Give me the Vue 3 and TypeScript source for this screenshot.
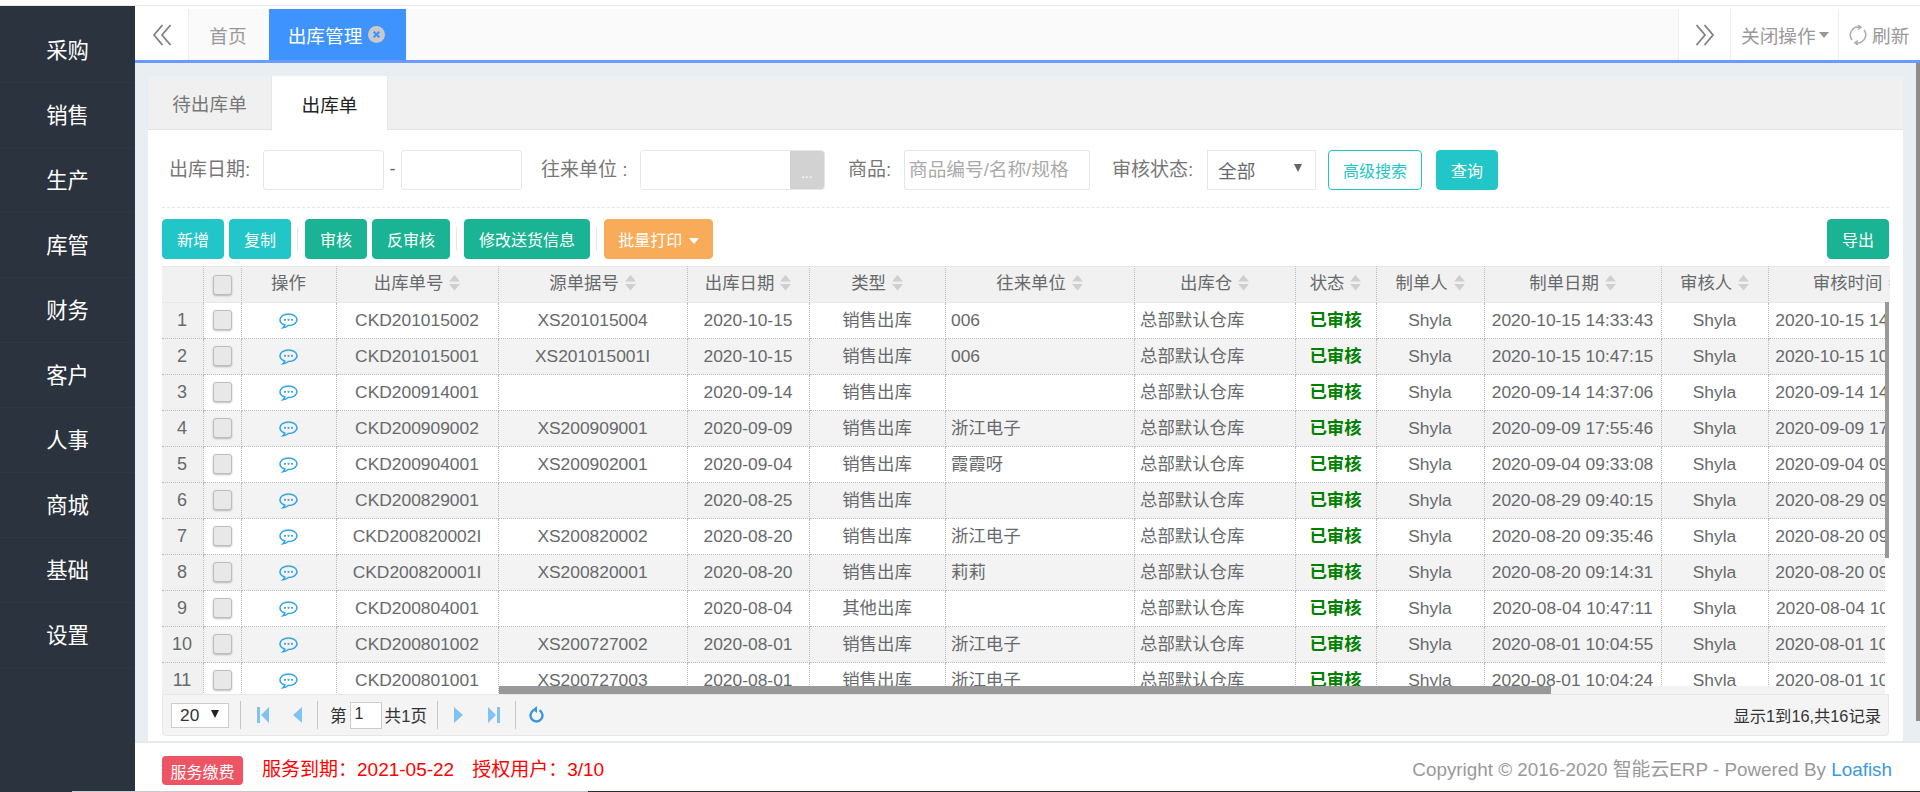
<script setup lang="ts">
interface Row {
  no: string
  src: string
  date: string
  type: string
  unit: string
  made: string
}
const menus = ['采购', '销售', '生产', '库管', '财务', '客户', '人事', '商城', '基础', '设置']
const columns = [
  { label: '出库单号', cls: 'c3' },
  { label: '源单据号', cls: 'c4' },
  { label: '出库日期', cls: 'c5' },
  { label: '类型', cls: 'c6' },
  { label: '往来单位', cls: 'c7' },
  { label: '出库仓', cls: 'c8' },
  { label: '状态', cls: 'c9' },
  { label: '制单人', cls: 'c10' },
  { label: '制单日期', cls: 'c11' },
  { label: '审核人', cls: 'c12' },
  { label: '审核时间', cls: 'c13' }
]
const rows: Row[] = [
  { no: 'CKD201015002', src: 'XS201015004', date: '2020-10-15', type: '销售出库', unit: '006', made: '2020-10-15 14:33:43' },
  { no: 'CKD201015001', src: 'XS201015001I', date: '2020-10-15', type: '销售出库', unit: '006', made: '2020-10-15 10:47:15' },
  { no: 'CKD200914001', src: '', date: '2020-09-14', type: '销售出库', unit: '', made: '2020-09-14 14:37:06' },
  { no: 'CKD200909002', src: 'XS200909001', date: '2020-09-09', type: '销售出库', unit: '浙江电子', made: '2020-09-09 17:55:46' },
  { no: 'CKD200904001', src: 'XS200902001', date: '2020-09-04', type: '销售出库', unit: '霞霞呀', made: '2020-09-04 09:33:08' },
  { no: 'CKD200829001', src: '', date: '2020-08-25', type: '销售出库', unit: '', made: '2020-08-29 09:40:15' },
  { no: 'CKD200820002I', src: 'XS200820002', date: '2020-08-20', type: '销售出库', unit: '浙江电子', made: '2020-08-20 09:35:46' },
  { no: 'CKD200820001I', src: 'XS200820001', date: '2020-08-20', type: '销售出库', unit: '莉莉', made: '2020-08-20 09:14:31' },
  { no: 'CKD200804001', src: '', date: '2020-08-04', type: '其他出库', unit: '', made: '2020-08-04 10:47:11' },
  { no: 'CKD200801002', src: 'XS200727002', date: '2020-08-01', type: '销售出库', unit: '浙江电子', made: '2020-08-01 10:04:55' },
  { no: 'CKD200801001', src: 'XS200727003', date: '2020-08-01', type: '销售出库', unit: '浙江电子', made: '2020-08-01 10:04:24' }
]
</script>

<template>
  <div class="app">
    <div class="topline"></div>
    <div class="body">
      <nav class="side">
        <a v-for="m in menus" :key="m" class="side-item">{{ m }}</a>
      </nav>
      <div class="content">
        <div class="tabsbar">
          <div class="chev">
            <svg width="20" height="24" viewBox="0 0 20 24" fill="none" stroke="#808080" stroke-width="1.8"><path d="M10.500 2 2 12l8.500 10M18.500 2 10 12l8.500 10" /></svg>
          </div>
          <div class="tab">首页</div>
          <div class="tab tab-on">
            出库管理
            <svg class="tab-x" width="17" height="17" viewBox="0 0 17 17"><circle cx="8.500" cy="8.500" r="8.500" fill="#c9c9c9" /><path d="M5.700 5.700l5.600 5.600M11.300 5.700l-5.600 5.600" stroke="#3e93ff" stroke-width="2.200" /></svg>
          </div>
          <div class="grow"></div>
          <div class="chev chev-r">
            <svg width="20" height="24" viewBox="0 0 20 24" fill="none" stroke="#808080" stroke-width="1.8"><path d="M1.500 2 10 12l-8.500 10M9.500 2 18 12 9.500 22" /></svg>
          </div>
          <div class="tool tool-close">关闭操作<i class="caret"></i></div>
          <div class="tool tool-refresh">
            <svg width="18" height="20" viewBox="0 0 18 20" fill="none" stroke="#aaa" stroke-width="1.500"><path d="M3 15A8 8 0 0 1 11 2.300M15 5A8 8 0 0 1 7 17.700" /><path d="M9 0l3 2.300-3 2.200M9 15.500l-3 2.200 3 2.300" /></svg>
            <span>刷新</span>
          </div>
        </div>
        <div class="page">
          <div class="panel">
            <div class="ptabs">
              <div class="ptab">待出库单</div>
              <div class="ptab ptab-on">出库单</div>
            </div>
            <div class="pbody">
              <div class="filters">
                <label class="lb lb-date">出库日期:</label>
                <input class="inp inp-date" />
                <span class="dash">-</span>
                <input class="inp inp-date" />
                <label class="lb lb-unit">往来单位 :</label>
                <div class="unit">
                  <input class="unit-in" />
                  <span class="unit-btn">...</span>
                </div>
                <label class="lb lb-goods">商品:</label>
                <input class="inp inp-goods" placeholder="商品编号/名称/规格" />
                <label class="lb lb-state">审核状态:</label>
                <div class="sel"><span>全部</span><i class="sel-arrow"></i></div>
                <button class="btn btn-ghost">高级搜索</button>
                <button class="btn btn-teal btn-query">查询</button>
              </div>
              <div class="toolbar">
                <button class="btn btn-teal">新增</button>
                <button class="btn btn-teal">复制</button>
                <i class="tsep"></i>
                <button class="btn btn-green">审核</button>
                <button class="btn btn-green">反审核</button>
                <i class="tsep"></i>
                <button class="btn btn-green">修改送货信息</button>
                <i class="tsep"></i>
                <button class="btn btn-orange">批量打印 <i class="caret caret-w"></i></button>
                <div class="grow"></div>
                <button class="btn btn-green">导出</button>
              </div>
              <div class="grid-wrap">
                <table class="grid">
                  <colgroup>
                    <col class="c1" /><col class="c2" /><col class="cop" />
                    <col v-for="c in columns" :key="c.label" :class="c.cls" />
                  </colgroup>
                  <thead>
                    <tr>
                      <th></th>
                      <th class="th-chk"><i class="chk"></i></th>
                      <th>操作</th>
                      <th v-for="c in columns" :key="c.label">
                        {{ c.label }}
                        <svg class="sort" width="11" height="16" viewBox="0 0 11 16"><path d="M5.500 0 11 6.500H0zM0 9h11l-5.500 6.500z" fill="#cfcfcf" /></svg>
                      </th>
                    </tr>
                  </thead>
                  <tbody>
                    <tr v-for="(r, i) in rows" :key="r.no" :class="{ odd: i % 2 === 1 }">
                      <td class="num">{{ i + 1 }}</td>
                      <td><i class="chk"></i></td>
                      <td>
                        <svg class="chat" width="19" height="16" viewBox="0 0 19 16" fill="none">
                          <path d="M9.500 1C4.800 1 1 3.600 1 6.800c0 2.300 2 4.300 4.800 5.200-.2 1-.8 2-1.800 2.800 2.200-.2 4-1.300 5.200-2.300h.3c4.700 0 8.500-2.500 8.500-5.700S14.200 1 9.500 1z" stroke="#35a5e8" stroke-width="1.600" />
                          <circle cx="6" cy="6.800" r="1.100" fill="#35a5e8" /><circle cx="9.500" cy="6.800" r="1.100" fill="#35a5e8" /><circle cx="13" cy="6.800" r="1.100" fill="#35a5e8" />
                        </svg>
                      </td>
                      <td>{{ r.no }}</td>
                      <td>{{ r.src }}</td>
                      <td>{{ r.date }}</td>
                      <td>{{ r.type }}</td>
                      <td class="left">{{ r.unit }}</td>
                      <td class="left">总部默认仓库</td>
                      <td class="state">已审核</td>
                      <td>Shyla</td>
                      <td>{{ r.made }}</td>
                      <td>Shyla</td>
                      <td>{{ r.made }}</td>
                    </tr>
                  </tbody>
                </table>
                <div class="vtrack"><div class="vthumb"></div></div>
                <div class="htrack"><div class="hthumb"></div></div>
              </div>
              <div class="pager">
                <div class="pg-sel"><span>20</span><i class="sel-arrow sel-dark"></i></div>
                <i class="psep psep-a"></i>
                <svg class="pi pi-first" width="12" height="16" viewBox="0 0 12 16"><path d="M0 0h3v16H0zM12 0v16L4 8z" fill="#82c2f2" /></svg>
                <svg class="pi pi-prev" width="9" height="16" viewBox="0 0 9 16"><path d="M9 0v16L0 8z" fill="#82c2f2" /></svg>
                <i class="psep psep-b"></i>
                <span class="pg-t">第</span>
                <input class="pg-in" value="1" />
                <span class="pg-t">共1页</span>
                <i class="psep psep-c"></i>
                <svg class="pi pi-next" width="9" height="16" viewBox="0 0 9 16"><path d="M0 0v16l9-8z" fill="#82c2f2" /></svg>
                <svg class="pi pi-last" width="12" height="16" viewBox="0 0 12 16"><path d="M0 0v16l8-8zM9 0h3v16H9z" fill="#82c2f2" /></svg>
                <i class="psep psep-d"></i>
                <svg class="pi pi-ref" width="15" height="18" viewBox="0 0 15 18" fill="none"><path d="M4.500 4.300a6 6 0 1 0 6 0" stroke="#3b96dc" stroke-width="2.400" /><path d="M8 0v7L3.500 3.500z" fill="#3b96dc" /></svg>
                <div class="grow"></div>
                <span class="pg-info">显示1到16,共16记录</span>
              </div>
            </div>
          </div>
        </div>
        <footer class="foot">
          <span class="pay">服务缴费</span>
          <span class="due">服务到期：2021-05-22</span>
          <span class="due due-u">授权用户：3/10</span>
          <div class="grow"></div>
          <span class="copy">Copyright © 2016-2020 智能云ERP - Powered By <a class="link">Loafish</a></span>
        </footer>
      </div>
    </div>
    <div class="bottomline"><i class="bl-a"></i><i class="bl-b"></i></div>
    <div class="pagebar"></div>
  </div>
</template>

<style>
html, body { margin: 0; padding: 0; overflow: hidden; background: #fff; }
* { box-sizing: border-box; }
</style>

<style scoped>
.app {
  position: relative;
  width: 1920px;
  height: 792px;
  display: flex;
  flex-direction: column;
  font-family: "Liberation Sans", "Noto Sans CJK SC", sans-serif;
  font-size: 17.33px;
  color: #676a6c;
  overflow: hidden;
}
.topline { height: 6px; background: #fff; border-bottom: 1px solid #e8e8e8; flex: none; }
.body { flex: 1; display: flex; min-height: 0; }
.grow { flex: 1; }

.side { width: 135px; flex: none; background: #2b333e; padding-top: 12px; }
.side-item {
  display: flex; align-items: center; justify-content: center;
  height: 65px; padding-bottom: 4px; color: #fff; font-size: 21.33px;
  border-bottom: 1px solid #2f3744;
}

.content { flex: 1; min-width: 0; display: flex; flex-direction: column; }
.tabsbar { margin-top: 3px; height: 54px; flex: none; display: flex; background: #fafafa; border-bottom: 3px solid #6a9bff; }
.chev { width: 54px; display: flex; align-items: center; justify-content: center; background: #fff; border-right: 1px solid #eee; }
.chev-r { width: 53px; border-left: 1px solid #eee; border-right: 1px solid #eee; }
.tab { width: 80px; padding-right: 2px; display: flex; align-items: center; justify-content: center; color: #999; font-size: 18.67px; }
.tab-on { width: 137px; background: #3e93ff; color: #fff; }
.tab-x { margin-left: 6px; }
.tool { display: flex; align-items: center; background: #fff; color: #999; font-size: 18.67px; }
.tool-close { width: 108px; padding-left: 10px; border-right: 1px solid #eee; }
.tool-refresh { width: 81px; padding-left: 10px; gap: 5px; }
.caret { display: inline-block; margin-left: 3px; border: 5.5px solid transparent; border-top: 6px solid #999; border-bottom: 0; }
.caret-w { border-top-color: #fff; margin-left: 2px; vertical-align: 2px; }

.page { flex: 1; min-height: 0; background: #e9eef3; padding: 13px 17px 0 13px; }
.panel { height: 100%; background: #fff; display: flex; flex-direction: column; }
.ptabs { height: 54px; flex: none; display: flex; background: #f0f0f0; border-bottom: 1px solid #e3e3e3; }
.ptab { width: 123px; height: 53px; display: flex; align-items: center; justify-content: center; font-size: 18.67px; color: #777; }
.ptab-on { width: 117px; height: 55px; background: #fff; color: #222; border-left: 1px solid #e7e7e7; border-right: 1px solid #e7e7e7; }
.pbody { flex: 1; padding: 20px 14px 0; min-height: 0; }

.filters { height: 58px; display: flex; align-items: flex-start; border-bottom: 1px dashed #e3e6e8; }
.lb { height: 40px; line-height: 39px; font-size: 19px; color: #777; white-space: nowrap; }
.lb-date { margin-left: 7px; width: 94px; }
.lb-unit { margin-left: 19px; width: 99px; }
.lb-goods { margin-left: 23px; width: 56px; }
.lb-state { margin-left: 22px; width: 95px; }
.inp { height: 40px; border: 1px solid #e5e6e7; border-radius: 3px; background: #fff; outline: none; font: inherit; padding: 0 4px; }
.inp-date { width: 121px; }
.dash { width: 17px; text-align: center; line-height: 38px; font-size: 18px; }
.unit { width: 185px; height: 40px; display: flex; border: 1px solid #e5e6e7; border-radius: 4px; overflow: hidden; }
.unit-in { flex: 1; min-width: 0; border: 0; outline: none; }
.unit-btn { width: 34px; background: #d2d2d2; color: #fff; font-size: 14px; text-align: center; line-height: 44px; }
.inp-goods { width: 186px; border-radius: 2px; font-size: 18.67px; }
.inp-goods::placeholder { color: #aaa; }
.sel { width: 109px; height: 40px; border: 1px solid #e5e6e7; display: flex; align-items: center; justify-content: space-between; padding: 0 13px 2px 10px; font-size: 18.67px; }
.sel-arrow { display: block; border: 4px solid transparent; border-top: 8px solid #666; border-bottom: 0; margin-top: -2px; }
.btn { height: 40px; border: 1px solid transparent; border-radius: 4px; color: #fff; font: inherit; font-size: 16px; padding: 0 13.500px; white-space: nowrap; }
.btn-teal { background: #23c6c8; border-color: #23c6c8; }
.btn-green { background: #1ab394; border-color: #1ab394; }
.btn-orange { background: #f8ac59; border-color: #f8ac59; padding: 0 13px; }
.btn-ghost { margin-left: 12px; width: 94px; padding: 0; background: #fff; border-color: #23c6c8; color: #23c6c8; }
.btn-query { margin-left: 14px; width: 62px; padding: 0; }

.toolbar { height: 40px; margin-top: 11px; display: flex; align-items: center; gap: 5px; }
.toolbar .btn { width: 62px; padding: 0; }
.toolbar .btn:nth-of-type(4) { width: 78px; }
.toolbar .btn:nth-of-type(5) { width: 126px; }
.toolbar .btn-orange { width: 109px; }
.tsep { width: 1px; height: 24px; background: #e4e6e8; margin: 0 1px; }
.toolbar .tsep + .btn { margin-left: 1px; }

.grid-wrap { position: relative; margin-top: 7px; width: 1728px; height: 428px; overflow: hidden; }
.grid { width: 1783px; table-layout: fixed; border-collapse: separate; border-spacing: 0; font-size: 17.4px; }
.c1 { width: 42px; } .c2 { width: 38px; } .cop { width: 95px; }
.c3 { width: 162px; } .c4 { width: 189px; } .c5 { width: 122px; } .c6 { width: 136px; }
.c7 { width: 189px; } .c8 { width: 161px; } .c9 { width: 81px; } .c10 { width: 108px; }
.c11 { width: 177px; } .c12 { width: 107px; } .c13 { width: 176px; }
th, td { padding: 0 1px 2px 0; text-align: center; white-space: nowrap; overflow: hidden; border-right: 1px dotted #bbb; border-bottom: 1px dotted #bbb; line-height: 20px; }
th { height: 37px; padding-bottom: 3px; background: #f1f1f1; font-weight: 400; border-top: 1px solid #e7e7e7; border-bottom: 1px solid #e7e7e7; }
th.th-chk { padding-bottom: 0; }
td { height: 36px; background: #fff; }
.odd td { background: #f3f3f3; }
td.num, .odd td.num { background: #f1f1f1; font-size: 18px; }
td.left { text-align: left; padding-left: 5px; }
td.state { color: #008000; font-weight: 700; }
.sort { vertical-align: -2px; margin-left: 1px; }
.chat { vertical-align: -3px; }
.chk {
  display: block; width: 19px; height: 20px; margin: 0 0 0 9px;
  background: #e8e8e8; border: 1px solid #bdbdbd; border-radius: 3px;
  box-shadow: 0 1px 2px rgba(0,0,0,.25);
}
.vtrack { position: absolute; left: 1723px; top: 36px; bottom: 0; width: 5px; background: #fff; }
.vthumb { width: 4px; height: 256px; background: #999; }
.htrack { position: absolute; left: 337px; right: 5px; bottom: 0; height: 8px; background: #f3f3f3; }
.hthumb { width: 1052px; height: 8px; background: #999; }

.pager { position: relative; width: 1727px; height: 42px; display: flex; align-items: center; background: #f4f4f4; border: 1px solid #e7e7e7; border-radius: 0 0 4px 4px; color: #333; font-size: 16px; }
.pg-sel { width: 58px; height: 25px; margin-left: 8px; background: #fff; border: 1px solid #ccc; display: flex; align-items: center; justify-content: space-between; padding: 0 9px 0 8px; font-size: 17.33px; }
.sel-dark { border-top-color: #222; }
.psep { width: 1px; height: 28px; background: #c5c5c5; }
.psep-a { margin-left: 11px; }
.pi-first { margin-left: 16px; }
.pi-prev { margin-left: 24px; }
.psep-b { margin-left: 15px; }
.pg-t { font-size: 16.6px; }
.psep-b + .pg-t { margin-left: 12px; }
.pg-in { width: 32px; height: 27px; margin: 0 3px; border: 1px solid #ccc; background: #fff; font: inherit; font-size: 16px; padding: 0 0 3px 4px; outline: none; color: #333; }
.psep-c { margin-left: 10px; }
.pi-next { margin-left: 16px; }
.pi-last { margin-left: 25px; }
.psep-d { margin-left: 15px; }
.pi-ref { margin-left: 13px; }
.pg-info { margin-right: 7px; font-size: 16.3px; }

.foot { height: 51px; flex: none; display: flex; align-items: center; background: #fff; border-top: 2px solid #e7eaec; padding: 6px 28px 0 27px; font-size: 19px; }
.pay { width: 81px; height: 29px; background: #ed5565; border-radius: 4px; color: #fff; font-size: 16px; display: flex; align-items: center; justify-content: center; }
.due { color: #f00; margin-left: 19px; font-size: 19px; padding-bottom: 7px; }
.due-u { margin-left: 18px; }
.copy { color: #999; font-size: 18.85px; padding-bottom: 7px; }
.link { color: #3a9ae0; }

.bottomline { position: absolute; left: 72px; right: 0; top: 790.500px; height: 1.500px; display: flex; }
.bl-a { width: 516px; background: #c8c8d0; }
.bl-b { flex: 1; background: #2a2a3a; }
.pagebar { position: absolute; left: 1916px; top: 63px; width: 4px; height: 658px; background: #8e8e8e; }
</style>
